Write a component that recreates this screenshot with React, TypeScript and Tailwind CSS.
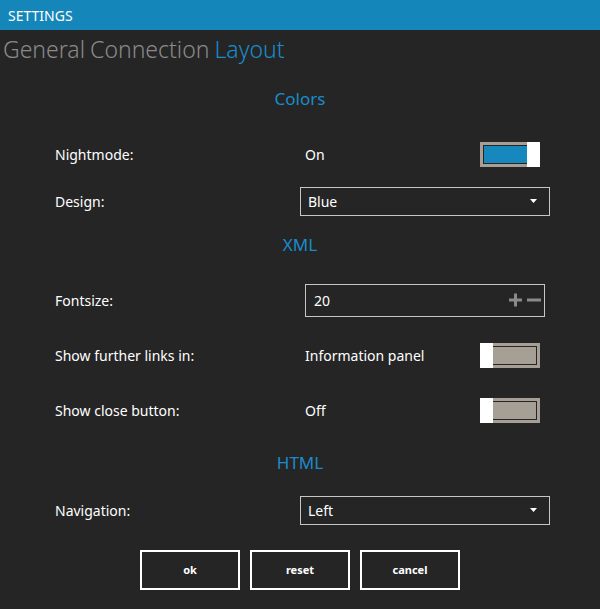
import { useState } from 'react';

const font = { fontFamily: '"Noto Sans", "Open Sans", sans-serif' };

const Toggle = ({ on }: { on: boolean }) => (
  <div className="relative w-[60px] h-[25px] border-[3px] border-[#a59f96] bg-[#252525] p-px">
    <div className={on ? 'w-full h-full bg-[#1688bd]' : 'w-full h-full bg-[#a59f96]'} />
    <div
      className={
        on
          ? 'absolute -top-[3px] -right-[3px] w-[13px] h-[25px] bg-white'
          : 'absolute -top-[3px] -left-[3px] w-[13px] h-[25px] bg-white'
      }
    />
  </div>
);

const Select = ({ value }: { value: string }) => (
  <div className="flex items-center justify-between w-[250px] h-[29px] border border-[#c6c6c6] pl-[7px] pr-[12px] text-[14px] text-white">
    <span>{value}</span>
    <svg width="7" height="4" viewBox="0 0 7 4">
      <path d="M0 0 L7 0 L3.5 4 Z" fill="white" />
    </svg>
  </div>
);

const Heading = ({ children, h }: { children: string; h: string }) => (
  <div className={`flex items-center justify-center text-[17px] text-[#1a8ccc] ${h}`}>{children}</div>
);

const Row = ({ label, children, h }: { label: string; children: React.ReactNode; h: string }) => (
  <div className={`flex items-center pl-[55px] ${h}`}>
    <div className="w-[245px] text-[14px] text-white">{label}</div>
    <div className="flex items-center w-[250px]">{children}</div>
  </div>
);

export default function App() {
  const [tab] = useState('Layout');

  return (
    <div className="w-[600px] h-[609px] bg-[#252525] overflow-hidden" style={font}>
      {/* Title bar */}
      <div className="h-[30px] bg-[#1486b9] flex items-center pl-[8px] text-[14px] text-white">SETTINGS</div>

      {/* Tabs */}
      <div className="h-[38px] flex items-center pl-[3px] gap-[5px] text-[23px] font-light">
        {['General', 'Connection', 'Layout'].map((t) => (
          <span key={t} className={t === tab ? 'text-[#1a8ccc]' : 'text-[#8a8a8a]'}>
            {t}
          </span>
        ))}
      </div>

      <Heading h="h-[61px]">Colors</Heading>

      <Row label="Nightmode:" h="h-[50px]">
        <span className="pl-[5px] w-[180px] text-[14px] text-white">On</span>
        <Toggle on />
      </Row>

      <Row label="Design:" h="h-[44px]">
        <Select value="Blue" />
      </Row>

      <Heading h="h-[44px]">XML</Heading>

      <Row label="Fontsize:" h="h-[66px]">
        <div className="ml-[5px] flex items-center justify-between w-[240px] h-[33px] border border-[#c6c6c6] pl-[8px] pr-[3px] text-[14px] text-white">
          <span>20</span>
          <svg width="34" height="14" viewBox="0 0 34 14">
            <path d="M2 7 H15 M8.5 0.5 V13.5" stroke="#8a8a8a" strokeWidth="3" />
            <path d="M20 7 H34" stroke="#8a8a8a" strokeWidth="3" />
          </svg>
        </div>
      </Row>

      <Row label="Show further links in:" h="h-[45px]">
        <span className="pl-[5px] w-[180px] text-[14px] text-white">Information panel</span>
        <Toggle on={false} />
      </Row>

      <Row label="Show close button:" h="h-[65px]">
        <span className="pl-[5px] w-[180px] text-[14px] text-white">Off</span>
        <Toggle on={false} />
      </Row>

      <Heading h="h-[40px]">HTML</Heading>

      <Row label="Navigation:" h="h-[54px]">
        <Select value="Left" />
      </Row>

      {/* Buttons */}
      <div className="mt-[13px] flex justify-center gap-[10px]">
        {['ok', 'reset', 'cancel'].map((b) => (
          <button
            key={b}
            className="w-[100px] h-[40px] border-2 border-white text-[11px] font-bold text-white"
          >
            {b}
          </button>
        ))}
      </div>
    </div>
  );
}
